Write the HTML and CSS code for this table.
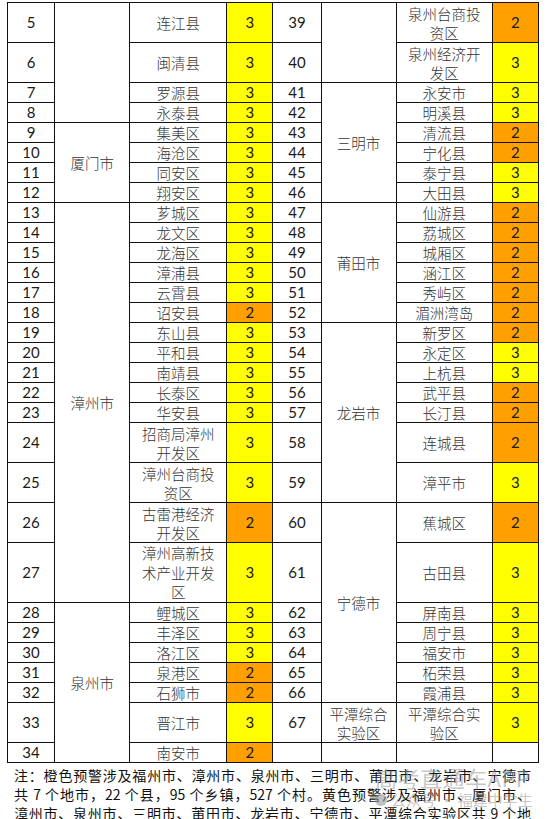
FILE: index.html
```html
<!DOCTYPE html>
<html lang="zh-CN">
<head>
<meta charset="utf-8">
<link rel="stylesheet" href="styles.css">
</head>
<body>
<div class="page">
<table class="grid">
<colgroup>
<col class="c-num"><col class="c-city"><col class="c-county"><col class="c-lvl">
<col class="c-num2"><col class="c-city"><col class="c-county2"><col class="c-lvl">
</colgroup>
<tr class="h2"><td class="n">5</td><td class="city" rowspan="4"></td><td>连江县</td><td class="y">3</td><td class="n">39</td><td class="city" rowspan="2"></td><td>泉州台商投<br>资区</td><td class="o">2</td></tr>
<tr class="h2"><td class="n">6</td><td>闽清县</td><td class="y">3</td><td class="n">40</td><td>泉州经济开<br>发区</td><td class="y">3</td></tr>
<tr><td class="n">7</td><td>罗源县</td><td class="y">3</td><td class="n">41</td><td class="city" rowspan="6">三明市</td><td>永安市</td><td class="y">3</td></tr>
<tr><td class="n">8</td><td>永泰县</td><td class="y">3</td><td class="n">42</td><td>明溪县</td><td class="y">3</td></tr>
<tr><td class="n">9</td><td class="city" rowspan="4">厦门市</td><td>集美区</td><td class="y">3</td><td class="n">43</td><td>清流县</td><td class="o">2</td></tr>
<tr><td class="n">10</td><td>海沧区</td><td class="y">3</td><td class="n">44</td><td>宁化县</td><td class="o">2</td></tr>
<tr><td class="n">11</td><td>同安区</td><td class="y">3</td><td class="n">45</td><td>泰宁县</td><td class="y">3</td></tr>
<tr><td class="n">12</td><td>翔安区</td><td class="y">3</td><td class="n">46</td><td>大田县</td><td class="y">3</td></tr>
<tr><td class="n">13</td><td class="city" rowspan="15">漳州市</td><td>芗城区</td><td class="y">3</td><td class="n">47</td><td class="city" rowspan="6">莆田市</td><td>仙游县</td><td class="o">2</td></tr>
<tr><td class="n">14</td><td>龙文区</td><td class="y">3</td><td class="n">48</td><td>荔城区</td><td class="o">2</td></tr>
<tr><td class="n">15</td><td>龙海区</td><td class="y">3</td><td class="n">49</td><td>城厢区</td><td class="o">2</td></tr>
<tr><td class="n">16</td><td>漳浦县</td><td class="y">3</td><td class="n">50</td><td>涵江区</td><td class="o">2</td></tr>
<tr><td class="n">17</td><td>云霄县</td><td class="y">3</td><td class="n">51</td><td>秀屿区</td><td class="o">2</td></tr>
<tr><td class="n">18</td><td>诏安县</td><td class="o">2</td><td class="n">52</td><td>湄洲湾岛</td><td class="o">2</td></tr>
<tr><td class="n">19</td><td>东山县</td><td class="y">3</td><td class="n">53</td><td class="city" rowspan="7">龙岩市</td><td>新罗区</td><td class="o">2</td></tr>
<tr><td class="n">20</td><td>平和县</td><td class="y">3</td><td class="n">54</td><td>永定区</td><td class="y">3</td></tr>
<tr><td class="n">21</td><td>南靖县</td><td class="y">3</td><td class="n">55</td><td>上杭县</td><td class="y">3</td></tr>
<tr><td class="n">22</td><td>长泰区</td><td class="y">3</td><td class="n">56</td><td>武平县</td><td class="o">2</td></tr>
<tr><td class="n">23</td><td>华安县</td><td class="y">3</td><td class="n">57</td><td>长汀县</td><td class="o">2</td></tr>
<tr class="h2"><td class="n">24</td><td>招商局漳州<br>开发区</td><td class="y">3</td><td class="n">58</td><td>连城县</td><td class="o">2</td></tr>
<tr class="h2"><td class="n">25</td><td>漳州台商投<br>资区</td><td class="y">3</td><td class="n">59</td><td>漳平市</td><td class="y">3</td></tr>
<tr class="h2"><td class="n">26</td><td>古雷港经济<br>开发区</td><td class="o">2</td><td class="n">60</td><td class="city" rowspan="7">宁德市</td><td>蕉城区</td><td class="o">2</td></tr>
<tr class="h3"><td class="n">27</td><td>漳州高新技<br>术产业开发<br>区</td><td class="y">3</td><td class="n">61</td><td>古田县</td><td class="y">3</td></tr>
<tr><td class="n">28</td><td class="city" rowspan="7">泉州市</td><td>鲤城区</td><td class="y">3</td><td class="n">62</td><td>屏南县</td><td class="y">3</td></tr>
<tr><td class="n">29</td><td>丰泽区</td><td class="y">3</td><td class="n">63</td><td>周宁县</td><td class="y">3</td></tr>
<tr><td class="n">30</td><td>洛江区</td><td class="y">3</td><td class="n">64</td><td>福安市</td><td class="y">3</td></tr>
<tr><td class="n">31</td><td>泉港区</td><td class="o">2</td><td class="n">65</td><td>柘荣县</td><td class="y">3</td></tr>
<tr><td class="n">32</td><td>石狮市</td><td class="o">2</td><td class="n">66</td><td>霞浦县</td><td class="y">3</td></tr>
<tr class="h2"><td class="n">33</td><td>晋江市</td><td class="y">3</td><td class="n">67</td><td class="city">平潭综合<br>实验区</td><td>平潭综合实<br>验区</td><td class="y">3</td></tr>
<tr><td class="n">34</td><td>南安市</td><td class="o">2</td><td></td><td></td><td></td><td></td></tr>
</table>
<div class="note">
<p class="line">注：橙色预警涉及福州市、漳州市、泉州市、三明市、莆田市、龙岩市、宁德市</p>
<p class="line">共 7 个地市，22 个县，95 个乡镇，527 个村。黄色预警涉及福州市、厦门市、</p>
<p class="line">漳州市、泉州市、三明市、莆田市、龙岩市、宁德市、平潭综合实验区共 9 个地</p>
</div>
<div class="mark">
<div class="mark-title">高考直通车APP</div>
<div class="mark-sub"><span class="mark-dot"></span>公众号 · 福建中学生</div>
</div>
</div>
</body>
</html>
```
FILE: styles.css
```css
html, body {
  margin: 0;
  padding: 0;
  background: #ffffff;
}
.page {
  position: relative;
  width: 547px;
  height: 819px;
  overflow: hidden;
  padding-top: 2px;
  box-sizing: border-box;
}
.grid {
  margin-left: 7px;
  border-collapse: collapse;
  table-layout: fixed;
  width: 532px;
  font-family: "Noto Sans CJK SC", sans-serif;
  font-weight: 300;
  font-size: 14.5px;
  color: #333;
}
.c-num { width: 47px; }
.c-city { width: 75px; }
.c-county { width: 97px; }
.c-lvl { width: 46px; }
.c-num2 { width: 48px; }
.c-county2 { width: 96px; }
.grid td {
  border: 1px solid #111;
  padding: 0;
  height: 19px;
  line-height: 19px;
  text-align: center;
  vertical-align: middle;
  white-space: nowrap;
}
.grid tr.h2 td { height: 39px; }
.grid tr.h3 td { height: 59px; line-height: 19.5px; }
.grid td.n, .grid td.y, .grid td.o {
  font-family: Lato, "Liberation Sans", sans-serif;
  font-weight: 400;
  font-size: 15px;
  color: #1a1a1a;
}
.grid td.city { height: auto; }
.grid td.y { background: #ffff00; }
.grid td.o { background: #ffa000; }
.note {
  width: 517px;
  padding: 3px 0 0 14px;
  font-family: "Noto Sans CJK SC", sans-serif;
  font-size: 14px;
  color: #111;
}
.line {
  margin: 0;
  line-height: 19px;
  text-align: justify;
  text-align-last: justify;
  white-space: nowrap;
}
.mark {
  position: absolute;
  left: 375px;
  top: 763px;
  color: rgba(150, 150, 150, 0.55);
  font-family: "Noto Sans CJK SC", sans-serif;
}
.mark-title {
  font-size: 22px;
  line-height: 28px;
  letter-spacing: 0.5px;
}
.mark-sub {
  font-size: 15px;
  line-height: 18px;
  display: flex;
  align-items: center;
  gap: 4px;
}
.mark-dot {
  width: 12px;
  height: 12px;
  border-radius: 50%;
  background: rgba(150, 150, 150, 0.6);
}
```
